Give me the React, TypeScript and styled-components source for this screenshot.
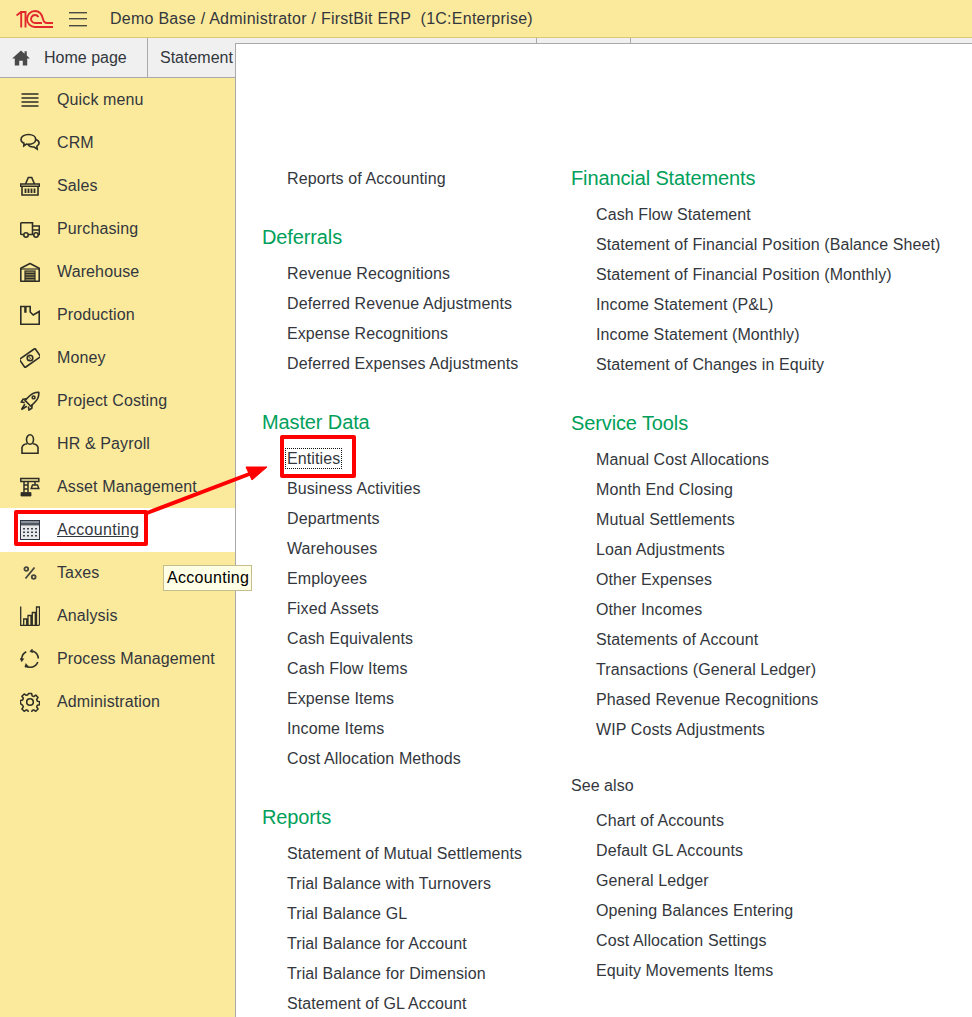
import React from "react";
import styled, { createGlobalStyle } from "styled-components";

const GlobalStyle = createGlobalStyle`
  html, body {
    margin: 0;
    padding: 0;
    background: #fff;
    font-family: "Liberation Sans", Arial, sans-serif;
    font-size: 16px;
    color: #333;
  }
`;

const INK = "#2e2e26";

const iconProps = {
  width: 20,
  height: 20,
  viewBox: "0 0 20 20",
  fill: "none",
  stroke: INK,
  strokeWidth: 1.6,
};

const icons: Record<string, React.ReactNode> = {
  quick: (
    <svg {...iconProps} strokeWidth={1.4}>
      <path d="M1.500 4h17M1.500 8h17M1.500 12h17M1.500 16h17" />
    </svg>
  ),
  crm: (
    <svg {...iconProps}>
      <path d="M8.500 1.500c4.200 0 7.200 2.100 7.200 4.900s-3 4.900-7.200 4.900c-.7 0-1.400-.1-2-.2L3.800 13l.2-2.800C2 9.300 1 7.900 1 6.400 1 3.600 4.300 1.500 8.500 1.500z" />
      <path d="M15.800 6.400c2 .7 3.300 2 3.300 3.600 0 1.300-.8 2.400-2.200 3.100l.3 3-3.100-2.100c-2.500.2-4.800-.6-6-2" />
    </svg>
  ),
  sales: (
    <svg {...iconProps}>
      <path d="M.5 8h19v2.300H.5zM2 10.300V19h16v-8.700M5.500 8 8.300 1.500h3.400L14.500 8" />
      <path d="M5.500 12.500v4.500M8.500 12.500v4.500M11.500 12.500v4.500M14.500 12.500v4.500" strokeWidth={1.8} />
    </svg>
  ),
  purchasing: (
    <svg {...iconProps}>
      <path d="M3.500 15.500H1.800c-.7 0-1.100-.4-1.100-1V4.800c0-.6.400-1 1.100-1h10.700v11.700H8.500M12.500 7h6.800v8.500h-1M12.500 15.500h1M12.500 11h6.800" />
      <circle cx="6" cy="16" r="2.200" />
      <circle cx="16" cy="16" r="2.200" />
    </svg>
  ),
  warehouse: (
    <svg {...iconProps}>
      <path d="M.8 19.200V6.300L10 1.500l9.200 4.800v12.900z" strokeLinejoin="round" />
      <path d="M1 7h18" strokeWidth={1.2} />
      <rect x="5" y="9" width="10" height="10" fill="#a99c60" strokeWidth={1.2} />
      <path d="M5 11.500h10M5 14h10M5 16.500h10" strokeWidth={1.3} />
    </svg>
  ),
  production: (
    <svg {...iconProps}>
      <path d="M.8 19.200V1.500h4.200V7h.8V1.500h4.400V7l3 3 6-3.500v12.700z" />
    </svg>
  ),
  money: (
    <svg {...iconProps}>
      <rect x=".4" y="5" width="19.200" height="10" rx="1" transform="rotate(-35 10 10)" />
      <circle cx="10" cy="10" r="2.800" />
      <path d="M9 11.200c1 .3 1.900-.5 1.300-1.300-.4-.5-1.200-.2-1.500-.7-.4-.7.500-1.400 1.300-1" strokeWidth={0.8} />
    </svg>
  ),
  project: (
    <svg {...iconProps}>
      <path d="M18.800 1.200c.3 4-1 7-3.500 9.500l-4.500 4.500-5.800-5.800L9.500 5c2.500-2.500 5.500-4 9.300-3.800z" strokeLinejoin="round" />
      <path d="M6.800 7.800 3 8.200 1.200 11l3.500.6M12.200 13.300l-.4 3.900L9 19l-.6-3.500" />
      <circle cx="13.600" cy="6.400" r="1.400" />
      <path d="M4.800 13.200 1.500 18.500l5.300-3.300" />
    </svg>
  ),
  hr: (
    <svg {...iconProps}>
      <path d="M6.500 5.500C6.500 3 8 .8 10 .8s3.500 2.200 3.500 4.700S12 10.300 10 10.300 6.500 8 6.500 5.500z" />
      <path d="M7.300 9.700c-3 .3-4.900 1.700-5.300 3.700v5.800h16v-5.800c-.4-2-2.300-3.400-5.300-3.700" />
    </svg>
  ),
  asset: (
    <svg {...iconProps} strokeWidth={1.5}>
      <path d="M.8 1.500h18v3H.8zM4 4.500V15.500M8 4.500V15.500M4 8h4M4 12h4" />
      <path d="M1 15.500h10v3.500H1z" fill={INK} strokeWidth={0.8} />
      <path d="M15 4.500V8" />
      <path d="M12.500 8h5l1.300 3.500h-7.600z" />
    </svg>
  ),
  taxes: (
    <svg {...iconProps} stroke="#45453c" strokeWidth={1.8}>
      <circle cx="6.300" cy="6" r="1.900" />
      <circle cx="13.700" cy="14" r="1.900" />
      <path d="M14.500 4.500 5.500 15.500" />
    </svg>
  ),
  analysis: (
    <svg {...iconProps} strokeWidth={1.3}>
      <path d="M.7 .5v18.800h18.800M3.700 19v-6h3v6M8 19V9.500h3V19M12.300 19V6.500h3V19M16.500 19V1h3v18" />
    </svg>
  ),
  process: (
    <svg {...iconProps}>
      <path d="M1.700 10a8.300 8.300 0 0 1 4.500-7.300M12.500 2a8.300 8.300 0 0 1 5.800 7.500M17.800 13a8.300 8.300 0 0 1-7.800 5.300 8.300 8.300 0 0 1-5-1.700" />
      <path d="M0 9.500 1.700 12.800 3.800 9.800zM12.200 0 9.800 2.500l3 1.200zM5.800 14.500 5 18.200l3.500-.8z" fill={INK} strokeWidth={0.5} />
    </svg>
  ),
  admin: (
    <svg {...iconProps}>
      <path d="M8.300 1h3.400l.5 2.600 1.700.7 2.200-1.500 2.400 2.400-1.500 2.200.7 1.700 2.300.5v3.400l-2.300.5-.7 1.700 1.500 2.200-2.400 2.400-2.200-1.500-1.700.7-.5 2.300H8.300l-.5-2.300-1.700-.7-2.200 1.500-2.400-2.400 1.500-2.200-.7-1.700L0 11.700V8.300l2.300-.5.7-1.700-1.500-2.200 2.400-2.400 2.200 1.500 1.700-.7z" transform="translate(.5 .5) scale(.95)" strokeLinejoin="round" />
      <circle cx="10" cy="10" r="3.300" />
    </svg>
  ),
  accounting: (
    <svg width={20} height={20} viewBox="0 0 20 20">
      <rect x=".5" y=".5" width="19" height="19" fill="#fff" stroke="#2e3440" />
      <rect x="1" y="1" width="18" height="1.500" fill="#8b929b" />
      <rect x="1" y="2.500" width="18" height="3" fill="#4e5661" />
      <rect x="1" y="6" width="18" height="13" fill="#e6e8ea" />
      <path d="M3 8h2v1.500H3zM7 8h2v1.500H7zM11 8h2v1.500h-2zM15 8h2v1.500h-2zM3 11.500h2V13H3zM7 11.500h2V13H7zM11 11.500h2V13h-2zM15 11.500h2V13h-2zM3 15h2v1.500H3zM7 15h2v1.500H7zM11 15h2v1.500h-2zM15 15h2v1.500h-2z" fill="#3b424d" />
    </svg>
  ),
};

const menu = [
  { key: "quick", label: "Quick menu" },
  { key: "crm", label: "CRM" },
  { key: "sales", label: "Sales" },
  { key: "purchasing", label: "Purchasing" },
  { key: "warehouse", label: "Warehouse" },
  { key: "production", label: "Production" },
  { key: "money", label: "Money" },
  { key: "project", label: "Project Costing" },
  { key: "hr", label: "HR & Payroll" },
  { key: "asset", label: "Asset Management" },
  { key: "accounting", label: "Accounting", active: true },
  { key: "taxes", label: "Taxes" },
  { key: "analysis", label: "Analysis" },
  { key: "process", label: "Process Management" },
  { key: "admin", label: "Administration" },
];

type Section = {
  title?: string;
  plain?: boolean;
  items: string[];
};

const leftColumn: Section[] = [
  { items: ["Reports of Accounting"] },
  {
    title: "Deferrals",
    items: [
      "Revenue Recognitions",
      "Deferred Revenue Adjustments",
      "Expense Recognitions",
      "Deferred Expenses Adjustments",
    ],
  },
  {
    title: "Master Data",
    items: [
      "Entities",
      "Business Activities",
      "Departments",
      "Warehouses",
      "Employees",
      "Fixed Assets",
      "Cash Equivalents",
      "Cash Flow Items",
      "Expense Items",
      "Income Items",
      "Cost Allocation Methods",
    ],
  },
  {
    title: "Reports",
    items: [
      "Statement of Mutual Settlements",
      "Trial Balance with Turnovers",
      "Trial Balance GL",
      "Trial Balance for Account",
      "Trial Balance for Dimension",
      "Statement of GL Account",
    ],
  },
];

const rightColumn: Section[] = [
  {
    title: "Financial Statements",
    items: [
      "Cash Flow Statement",
      "Statement of Financial Position (Balance Sheet)",
      "Statement of Financial Position (Monthly)",
      "Income Statement (P&L)",
      "Income Statement (Monthly)",
      "Statement of Changes in Equity",
    ],
  },
  {
    title: "Service Tools",
    items: [
      "Manual Cost Allocations",
      "Month End Closing",
      "Mutual Settlements",
      "Loan Adjustments",
      "Other Expenses",
      "Other Incomes",
      "Statements of Account",
      "Transactions (General Ledger)",
      "Phased Revenue Recognitions",
      "WIP Costs Adjustments",
    ],
  },
  {
    title: "See also",
    plain: true,
    items: [
      "Chart of Accounts",
      "Default GL Accounts",
      "General Ledger",
      "Opening Balances Entering",
      "Cost Allocation Settings",
      "Equity Movements Items",
    ],
  },
];

const Logo = () => (
  <svg width={38} height={18} viewBox="0 0 38 18" fill="none" stroke="#e2282d" strokeWidth={1.9}>
    <path d="M.5 5.500 5 2h4.500v15.500M5.200 2.500v15" />
    <path d="M37 17H19a8 8 0 1 1 0-16c4 0 7 3.500 8 8 .5 2.500 1.500 4 4 4h6" />
    <path d="M26 13h-7a4 4 0 1 1 3.500-6" />
  </svg>
);

const App = () => {
  const renderColumn = (sections: Section[]) =>
    sections.map((section, i) => (
      <MenuSection key={i}>
        {section.title &&
          (section.plain ? (
            <PlainTitle>{section.title}</PlainTitle>
          ) : (
            <SectionTitle>{section.title}</SectionTitle>
          ))}
        <LinkList>
          {section.items.map((item) => (
            <LinkRow key={item}>
              <LinkText $focused={item === "Entities"}>{item}</LinkText>
            </LinkRow>
          ))}
        </LinkList>
      </MenuSection>
    ));

  return (
    <Page>
      <GlobalStyle />
      <Header>
        <Logo />
        <Burger>
          <span />
          <span />
          <span />
        </Burger>
        <HeaderTitle>Demo Base / Administrator / FirstBit ERP&nbsp; (1C:Enterprise)</HeaderTitle>
      </Header>
      <TabBar>
        <HomeTab>
          <svg width={18} height={16} viewBox="0 0 20 18" fill="#4a4a4a">
            <path d="M10 .5 0 9.500h3V17.500h5v-5.500h4v5.500h5V9.500h3l-3.500-3.200V1.500h-2.500v2.600z" />
          </svg>
          Home page
        </HomeTab>
        <Tab $width={389}>Statement of Financial Position</Tab>
        <Tab $width={94}>Entities</Tab>
      </TabBar>
      <Workspace>
        <Sidebar>
          {menu.map((m) => (
            <SideItem key={m.key} $active={m.active}>
              <SideIcon>{icons[m.key]}</SideIcon>
              <SideLabel $active={m.active}>{m.label}</SideLabel>
            </SideItem>
          ))}
        </Sidebar>
        <Panel>
          <LeftColumn>{renderColumn(leftColumn)}</LeftColumn>
          <RightColumn>{renderColumn(rightColumn)}</RightColumn>
        </Panel>
      </Workspace>

      <Tooltip>Accounting</Tooltip>
      <AccountingMark />
      <EntitiesMark />
      <ArrowLayer width={972} height={1017} viewBox="0 0 972 1017">
        <path d="M147 513 252 473" stroke="#ff0000" strokeWidth={4} fill="none" />
        <path d="M267 467 246 467 252 480z" fill="#ff0000" stroke="#ff0000" strokeLinejoin="round" />
      </ArrowLayer>
    </Page>
  );
};

export default App;

const Page = styled.div`
  position: relative;
  width: 972px;
  height: 1017px;
  overflow: hidden;
  line-height: 20px;
`;

const Header = styled.header`
  display: flex;
  align-items: center;
  height: 37px;
  padding-left: 16px;
  background: #fbea9c;
  border-bottom: 1px solid #d8c878;
`;

const Burger = styled.div`
  display: flex;
  flex-direction: column;
  justify-content: space-between;
  width: 18px;
  height: 14px;
  margin-left: 15px;

  span {
    display: block;
    height: 1px;
    background: #4a4a40;
    box-shadow: 0 0.5px 0 #6a6a58;
  }
`;

const HeaderTitle = styled.div`
  margin-left: 23px;
  color: #33373d;
  letter-spacing: 0.26px;
`;

const TabBar = styled.nav`
  display: flex;
  height: 39px;
  background: #f0f0f0;
  border-bottom: 1px solid #a9a9a9;
`;

const Tab = styled.div<{ $width: number }>`
  display: flex;
  align-items: center;
  flex: none;
  box-sizing: border-box;
  width: ${(p) => p.$width}px;
  padding-left: 12px;
  border-right: 1px solid #a9a9a9;
  color: #33373d;
  white-space: nowrap;
  overflow: hidden;
`;

const HomeTab = styled.div`
  display: flex;
  align-items: center;
  gap: 14px;
  flex: none;
  box-sizing: border-box;
  width: 148px;
  padding-left: 12px;
  border-right: 1px solid #a9a9a9;
  color: #33373d;
`;

const Workspace = styled.div`
  display: flex;
  height: 939px;
`;

const Sidebar = styled.aside`
  flex: none;
  width: 235px;
  height: 100%;
  background: #fbea9c;
`;

const SideItem = styled.div<{ $active?: boolean }>`
  display: flex;
  align-items: center;
  gap: 17px;
  height: 43px;
  padding-left: 20px;
  background: ${(p) => (p.$active ? "#fff" : "transparent")};
  box-shadow: ${(p) => (p.$active ? "0 1px 0 #fff" : "none")};
`;

const SideIcon = styled.span`
  display: flex;
  flex: none;
  width: 20px;
  height: 20px;
`;

const SideLabel = styled.span<{ $active?: boolean }>`
  color: #33373d;
  letter-spacing: ${(p) => (p.$active ? "0.3px" : "0.12px")};
  text-decoration: ${(p) => (p.$active ? "underline" : "none")};
`;

const Panel = styled.main`
  display: flex;
  flex: 1;
  height: 974px;
  margin-top: -35px;
  padding-left: 26px;
  position: relative;
  background: #fff;
  border-left: 1px solid #a9a9a9;
  border-top: 1px solid #a9a9a9;
`;

const LeftColumn = styled.div`
  flex: none;
  width: 309px;
  padding-top: 120px;
`;

const RightColumn = styled.div`
  flex: none;
  padding-top: 122px;
`;

const MenuSection = styled.section`
  margin-bottom: 31px;

  &:has(h4) {
    margin-bottom: 0;
  }
`;

const SectionTitle = styled.h3`
  margin: 0 0 10px;
  font-size: 20px;
  font-weight: 400;
  line-height: 24px;
  letter-spacing: -0.12px;
  color: #00a05a;
`;

const PlainTitle = styled.h4`
  margin: 0 0 10px;
  font-size: 16px;
  font-weight: 400;
  line-height: 20px;
  letter-spacing: 0.05px;
  color: #33373d;
`;

const LinkList = styled.ul`
  margin: 0;
  padding: 0 0 0 25px;
  list-style: none;
`;

const LinkRow = styled.li`
  height: 30px;
  line-height: 30px;
  white-space: nowrap;
  letter-spacing: 0.1px;
  color: #33373d;
`;

const LinkText = styled.span<{ $focused?: boolean }>`
  outline: ${(p) => (p.$focused ? "1px dotted #111" : "none")};
  outline-offset: 1px;
`;

const Tooltip = styled.div`
  position: absolute;
  left: 163px;
  top: 565px;
  box-sizing: border-box;
  width: 89px;
  height: 26px;
  padding-left: 3px;
  line-height: 24px;
  letter-spacing: 0.3px;
  color: #000;
  background: #ffffe6;
  border: 1px solid #c4bd8c;
`;

const AccountingMark = styled.div`
  position: absolute;
  left: 14px;
  top: 510px;
  box-sizing: border-box;
  width: 134px;
  height: 36px;
  border: 4px solid #ff0000;
  border-radius: 2px;
`;

const EntitiesMark = styled.div`
  position: absolute;
  left: 280px;
  top: 435px;
  box-sizing: border-box;
  width: 76px;
  height: 43px;
  border: 4px solid #ff0000;
  border-radius: 2px;
`;

const ArrowLayer = styled.svg`
  position: absolute;
  left: 0;
  top: 0;
  pointer-events: none;
`;
